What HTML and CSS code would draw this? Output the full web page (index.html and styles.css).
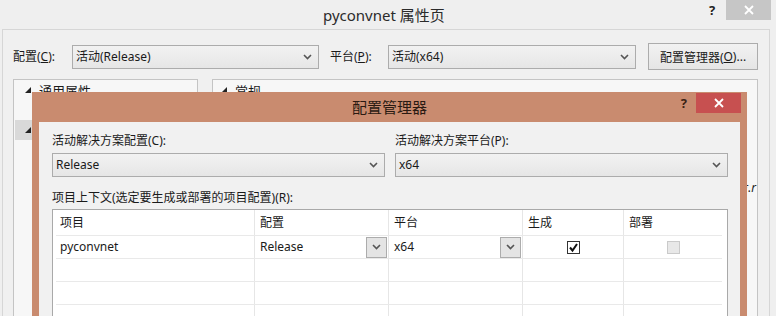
FILE: index.html
```html
<!DOCTYPE html>
<html>
<head>
<meta charset="utf-8">
<link rel="stylesheet" href="styles.css">
</head>
<body>
<div class="window">
  <div class="titlebar">
    <div class="title">pyconvnet 属性页</div>
    <div class="spacer"></div>
    <div class="help">?</div>
    <div class="close gray">
      <svg width="10" height="10" viewBox="0 0 10 10"><path d="M1 1 L9 9 M9 1 L1 9" stroke="#fff" stroke-width="1.8"/></svg>
    </div>
  </div>
  <div class="outer">
    <div class="toprow">
      <div class="lbl lbl1">配置(<u>C</u>):</div>
      <div class="combo combo1"><span>活动(Release)</span>
        <svg class="chev" width="9" height="6" viewBox="0 0 9 6"><path d="M1 1 L4.5 4.5 L8 1" fill="none" stroke="#555" stroke-width="1.6"/></svg>
      </div>
      <div class="lbl lbl2">平台(<u>P</u>):</div>
      <div class="combo combo2"><span>活动(x64)</span>
        <svg class="chev" width="9" height="6" viewBox="0 0 9 6"><path d="M1 1 L4.5 4.5 L8 1" fill="none" stroke="#555" stroke-width="1.6"/></svg>
      </div>
      <div class="btn">配置管理器(<u>O</u>)...</div>
    </div>
    <div class="panels">
      <div class="panel left">
        <div class="tree-row">
          <svg class="tri" width="6" height="6" viewBox="0 0 6 6"><polygon points="6,0 6,6 0,6" fill="#222"/></svg>
          <span>通用属性</span>
        </div>
        <div class="tree-row"></div>
        <div class="tree-row sel">
          <svg class="tri" width="6" height="6" viewBox="0 0 6 6"><polygon points="6,0 6,6 0,6" fill="#222"/></svg>
        </div>
      </div>
      <div class="panel right">
        <div class="tree-row">
          <svg class="tri" width="6" height="6" viewBox="0 0 6 6"><polygon points="6,0 6,6 0,6" fill="#222"/></svg>
          <span>常规</span>
        </div>
        <div class="ext">*.r</div>
      </div>
    </div>
  </div>

  <div class="dialog">
    <div class="dtitlebar">
      <div></div>
      <div class="dtitle">配置管理器</div>
      <div class="dctrls">
        <div class="dhelp">?</div>
        <div class="close red">
          <svg width="10" height="10" viewBox="0 0 10 10"><path d="M1 1 L9 9 M9 1 L1 9" stroke="#fff" stroke-width="1.8"/></svg>
        </div>
      </div>
    </div>
    <div class="dcontent">
      <div class="two">
        <div class="field">
          <div class="flabel">活动解决方案配置(C):</div>
          <div class="combo"><span>Release</span>
            <svg class="chev" width="9" height="6" viewBox="0 0 9 6"><path d="M1 1 L4.5 4.5 L8 1" fill="none" stroke="#555" stroke-width="1.6"/></svg>
          </div>
        </div>
        <div class="field">
          <div class="flabel">活动解决方案平台(P):</div>
          <div class="combo"><span>x64</span>
            <svg class="chev" width="9" height="6" viewBox="0 0 9 6"><path d="M1 1 L4.5 4.5 L8 1" fill="none" stroke="#555" stroke-width="1.6"/></svg>
          </div>
        </div>
      </div>
      <div class="glabel">项目上下文(选定要生成或部署的项目配置)(R):</div>
      <div class="grid">
        <div class="row head">
          <div class="cell">项目</div>
          <div class="cell">配置</div>
          <div class="cell">平台</div>
          <div class="cell">生成</div>
          <div class="cell">部署</div>
        </div>
        <div class="row">
          <div class="cell first">pyconvnet</div>
          <div class="cell"><span>Release</span><div class="cbtn"><svg width="9" height="6" viewBox="0 0 9 6"><path d="M1 1 L4.5 4.5 L8 1" fill="none" stroke="#555" stroke-width="1.6"/></svg></div></div>
          <div class="cell"><span>x64</span><div class="cbtn"><svg width="9" height="6" viewBox="0 0 9 6"><path d="M1 1 L4.5 4.5 L8 1" fill="none" stroke="#555" stroke-width="1.6"/></svg></div></div>
          <div class="cell center"><div class="chk on"><svg width="11" height="11" viewBox="0 0 11 11"><path d="M2 5.5 L4.5 8.5 L9 2" fill="none" stroke="#111" stroke-width="2"/></svg></div></div>
          <div class="cell center"><div class="chk off"></div></div>
        </div>
        <div class="row">
          <div class="cell"></div><div class="cell"></div><div class="cell"></div><div class="cell"></div><div class="cell"></div>
        </div>
        <div class="row">
          <div class="cell"></div><div class="cell"></div><div class="cell"></div><div class="cell"></div><div class="cell"></div>
        </div>
        <div class="row">
          <div class="cell"></div><div class="cell"></div><div class="cell"></div><div class="cell"></div><div class="cell"></div>
        </div>
      </div>
    </div>
  </div>
</div>
</body>
</html>
```
FILE: styles.css
```css
* { box-sizing: border-box; }
html, body { margin: 0; padding: 0; }
body {
  font-family: "Noto Sans", "Noto Sans CJK SC", sans-serif;
  font-size: 12px;
  color: #1a1a1a;
  background: #f0f0f0;
}
.window {
  position: relative;
  width: 776px;
  height: 316px;
  overflow: hidden;
  background: #efefef;
}
.titlebar {
  display: flex;
  height: 29px;
}
.title {
  margin-left: 323px;
  font-size: 15px;
  line-height: 30px;
  color: #2b2b2b;
}
.spacer { flex: 1; }
.help {
  width: 14px;
  margin-right: 7px;
  font-weight: bold;
  font-size: 13px;
  line-height: 20px;
  text-align: center;
  color: #222;
}
.close {
  width: 45px;
  height: 20px;
  display: flex;
  align-items: center;
  justify-content: center;
}
.close.gray { background: #c6c6c6; margin-right: 5px; }
.close.red { background: #c75050; }

.outer {
  margin: 0 6px 0 2px;
  height: 300px;
  border: 1px solid #d6d6d6;
  border-bottom: none;
  background: #f0f0f0;
}
.toprow {
  display: flex;
  align-items: center;
  height: 27px;
  margin-top: 13px;
  padding-left: 10px;
}
.lbl { line-height: 16px; }
.lbl1 { width: 59px; }
.lbl2 { width: 58px; margin-left: 11px; }
.combo {
  height: 24px;
  border: 1px solid #acacac;
  background: linear-gradient(#f2f2f2, #e6e6e6);
  display: flex;
  align-items: center;
  justify-content: space-between;
  padding: 0 6px 0 3px;
  line-height: 16px;
}
.combo1 { width: 247px; }
.combo2 { width: 248px; }
.btn {
  margin-left: 12px;
  width: 110px;
  height: 27px;
  border: 1px solid #acacac;
  background: linear-gradient(#f2f2f2, #e5e5e5);
  display: flex;
  align-items: center;
  justify-content: center;
}
.panels {
  display: flex;
  margin-top: 9px;
}
.panel {
  height: 240px;
  border: 1px solid #c4c4c4;
  background: #f7f7f7;
  overflow: hidden;
}
.panel.left { margin-left: 10px; width: 185px; padding-left: 1px; }
.panel.right { margin-left: 14px; width: 546px; }
.tree-row {
  height: 20px;
  display: flex;
  align-items: center;
  font-size: 13px;
}
.tree-row .tri { margin: 0 8px 0 11px; }
.panel.left .tree-row .tri { margin-left: 10px; }
.tree-row.sel { background: #d9d9d9; }
.panel.right .tree-row .tri { margin-left: 8px; }
.ext {
  margin-top: 80px;
  text-align: right;
  font-style: italic;
  font-size: 12px;
  line-height: 16px;
  padding-right: 1px;
}

.dialog {
  position: absolute;
  left: 32px;
  top: 92px;
  width: 715px;
  height: 240px;
  background: #c98b6f;
  padding: 0 7px;
}
.dtitlebar {
  display: grid;
  grid-template-columns: 1fr auto 1fr;
  height: 30px;
}
.dtitle {
  font-size: 15px;
  line-height: 30px;
  color: #2a1a12;
}
.dctrls {
  display: flex;
  justify-content: flex-end;
  align-items: flex-start;
  padding-top: 1px;
  margin-right: -1px;
}
.dhelp {
  font-weight: bold;
  font-size: 13px;
  line-height: 20px;
  color: #3a2214;
  margin-right: 9px;
}
.dcontent {
  background: #f1f1f1;
  height: 210px;
  padding: 11px 12px 0 13px;
}
.two {
  display: grid;
  grid-template-columns: 1fr 1fr;
  column-gap: 10px;
}
.flabel { line-height: 16px; margin-bottom: 4px; }
.glabel { line-height: 16px; margin-top: 13px; margin-bottom: 3px; }
.grid {
  border: 1px solid #a9a9a9;
  background: #fff;
  padding: 0 5px 0 3px;
  height: 120px;
}
.row {
  display: grid;
  grid-template-columns: 199px 134px 134px 101px 1fr;
  height: 23px;
  border-bottom: 1px solid #e9e9e9;
}
.row.head { height: 26px; }
.cell {
  border-right: 1px solid #e6e6e6;
  padding-left: 5px;
  display: flex;
  align-items: center;
  justify-content: space-between;
  line-height: 16px;
}
.cell.first { padding-left: 4px; }
.row.head .cell:first-child { padding-left: 4px; }
.cell:last-child { border-right: none; }
.cell.center { justify-content: center; padding-left: 0; }
.cbtn {
  width: 21px;
  height: 21px;
  margin-right: 1px;
  border: 1px solid #acacac;
  background: #e4e4e4;
  display: flex;
  align-items: center;
  justify-content: center;
}
.chk {
  width: 13px;
  height: 13px;
  display: flex;
  align-items: center;
  justify-content: center;
}
.chk.on { border: 1px solid #333; background: #fff; }
.chk.off { border: 1px solid #cacaca; background: #e8e8e8; }
```
